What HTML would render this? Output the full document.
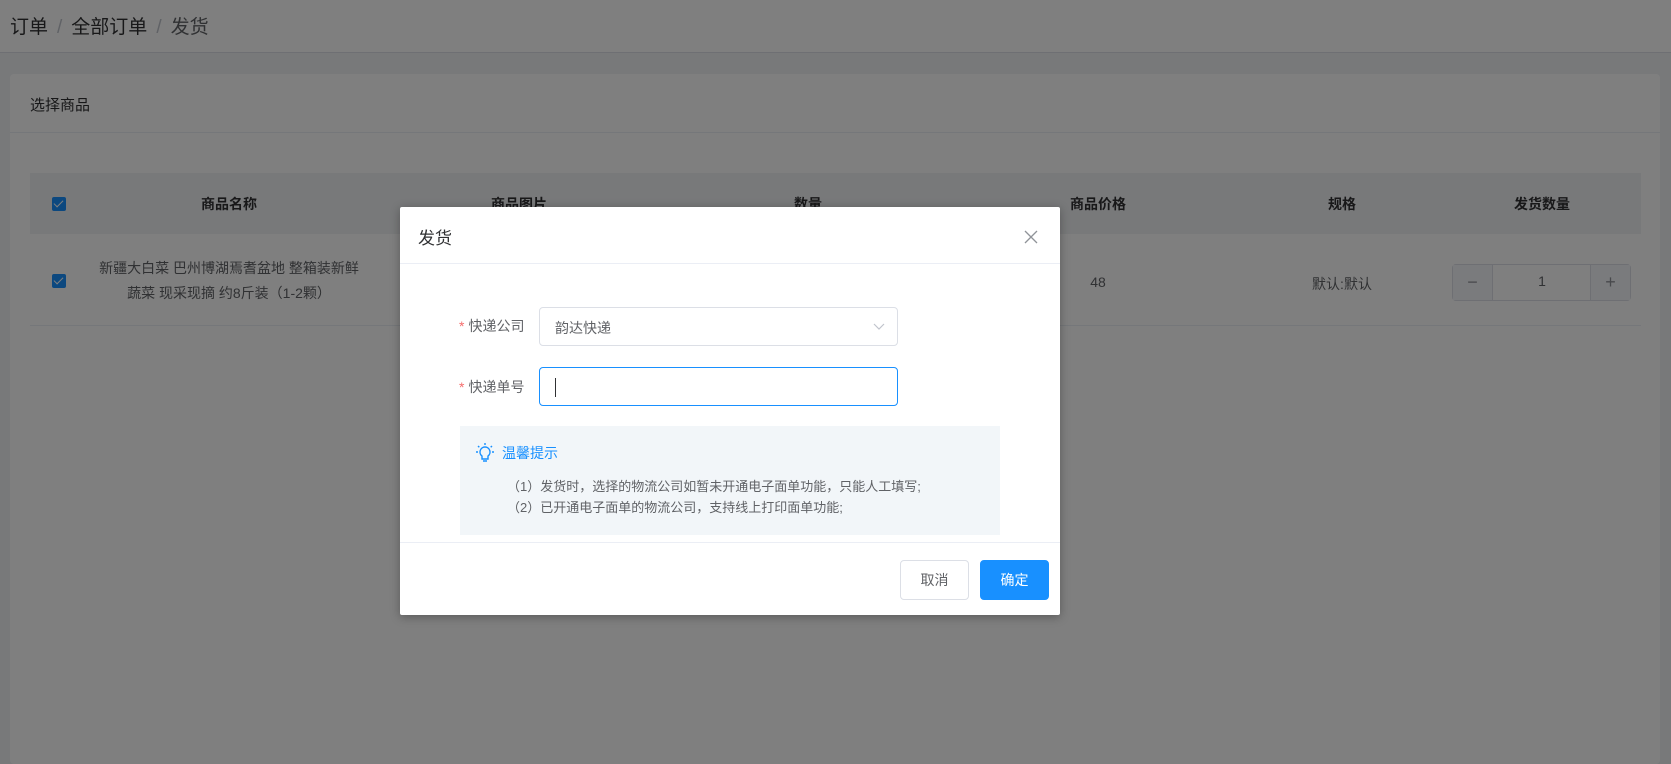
<!DOCTYPE html>
<html style="overflow:hidden"><head><meta charset="utf-8"><style>
*{box-sizing:border-box;margin:0;padding:0}
html,body{width:1671px;height:764px;overflow:hidden}
body{background:#f0f2f5;font-family:"Liberation Sans","Noto Sans CJK SC",sans-serif;color:#303133;position:relative}
.bc{position:absolute;left:0;top:0;width:1671px;height:53px;background:#fff;border-bottom:1px solid #dcdfe6;font-size:19px;padding:12px 0 0 10px;color:#303133}
.bc span.s{color:#c0c4cc;margin:0 9px}
.bc .l{color:#606266}
.card{position:absolute;left:10px;top:74px;width:1650px;height:690px;background:#fff;border-radius:4px}
.card .hd{height:59px;border-bottom:1px solid #ebeef5;padding:20px 0 0 20px;font-size:15px}
.th{position:absolute;left:20px;top:99px;width:1611px;height:61px;background:#f0f2f5;font-weight:bold;font-size:14px;color:#303133}
.cell{position:absolute;transform:translateX(-50%);white-space:nowrap}
.cb{position:absolute;width:14px;height:14px;background:#1890ff;border-radius:2px}
.cb:after{content:"";position:absolute;left:4px;top:1px;width:4px;height:8px;border:solid #fff;border-width:0 1.5px 1.5px 0;transform:rotate(45deg)}
.row{position:absolute;left:20px;top:160px;width:1611px;height:92px;border-bottom:1px solid #ebeef5;font-size:14px;color:#606266}
.step{position:absolute;left:1422px;top:30px;width:179px;height:37px;border:1px solid #dcdfe6;border-radius:4px;background:#fff}
.step .b{position:absolute;top:0;width:40px;height:35px;background:#f5f7fa;color:#909399;text-align:center;line-height:35px;font-size:18px}
.mask{position:absolute;left:0;top:0;width:1671px;height:764px;background:rgba(0,0,0,.5)}
.modal{position:absolute;left:400px;top:207px;width:660px;height:408px;background:#fff;border-radius:2px;box-shadow:0 2px 10px rgba(0,0,0,.3)}
.mh{height:57px;border-bottom:1px solid #ebeef5;padding:17px 0 0 18px;font-size:17px;color:#303133;position:relative}
.x{position:absolute;right:22px;top:23px;width:14px;height:14px}
.lab{position:absolute;left:59px;font-size:14px;color:#606266}
.lab i{color:#f56c6c;font-style:normal;margin-right:4px}
.inp{position:absolute;left:139px;width:359px;height:39px;border:1px solid #dcdfe6;border-radius:4px;font-size:14px;color:#606266;padding:10px 15px}
.tip{position:absolute;left:60px;top:219px;width:540px;height:109px;background:#f2f6f9}
.ft{position:absolute;left:0;top:335px;width:660px;border-top:1px solid #ebeef5}
.btn{position:absolute;top:353px;height:40px;width:69px;border-radius:4px;font-size:14px;text-align:center;line-height:38px}
</style></head><body>
<div class="bc">订单<span class="s">/</span>全部订单<span class="s">/</span><span class="l">发货</span></div>
<div class="card">
 <div class="hd">选择商品</div>
 <div class="th">
  <div class="cb" style="left:22px;top:24px"></div>
  <div class="cell" style="left:199px;top:21px">商品名称</div>
  <div class="cell" style="left:489px;top:21px">商品图片</div>
  <div class="cell" style="left:778px;top:21px">数量</div>
  <div class="cell" style="left:1068px;top:21px">商品价格</div>
  <div class="cell" style="left:1312px;top:21px">规格</div>
  <div class="cell" style="left:1512px;top:21px">发货数量</div>
 </div>
 <div class="row">
  <div class="cb" style="left:22px;top:40px"></div>
  <div class="cell" style="left:199px;top:22px;text-align:center;line-height:25px">新疆大白菜 巴州博湖焉耆盆地 整箱装新鲜<br>蔬菜 现采现摘 约8斤装（1-2颗）</div>
  <div class="cell" style="left:1068px;top:40px">48</div>
  <div class="cell" style="left:1312px;top:40px">默认:默认</div>
  <div class="step"><div class="b" style="left:0;border-right:1px solid #dcdfe6">−</div><div class="cell" style="left:89px;top:8px;color:#606266">1</div><div class="b" style="right:0;border-left:1px solid #dcdfe6">+</div></div>
 </div>
</div>
<div class="mask"></div>
<div class="modal">
 <div class="mh">发货<svg class="x" viewBox="0 0 14 14"><path d="M1 1L13 13M13 1L1 13" stroke="#909399" stroke-width="1.3"/></svg></div>
 <div class="lab" style="top:109px"><i>*</i>快递公司</div>
 <div class="inp" style="top:100px">韵达快递<svg style="position:absolute;right:12px;top:15px" width="12" height="8" viewBox="0 0 12 8"><path d="M1 1L6 6L11 1" fill="none" stroke="#c0c4cc" stroke-width="1.2"/></svg></div>
 <div class="lab" style="top:170px"><i>*</i>快递单号</div>
 <div class="inp" style="top:160px;border-color:#1890ff"><div style="width:1px;height:19px;background:#303133"></div></div>
 <div class="tip">
  <svg style="position:absolute;left:15px;top:16px" width="20" height="22" viewBox="0 0 20 22"><g fill="none" stroke="#1890ff" stroke-width="1.4"><path d="M10 5a5 5 0 0 0-3 9v3h6v-3a5 5 0 0 0-3-9z"/><path d="M8 19h4M10 1v2M3 4l1.3 1.3M17 4l-1.3 1.3M1 10h2M17 10h2"/></g></svg>
  <div style="position:absolute;left:42px;top:17px;color:#1890ff;font-size:14px">温馨提示</div>
  <div style="position:absolute;left:47px;top:50px;color:#606266;font-size:13px;line-height:21px">（1）发货时，选择的物流公司如暂未开通电子面单功能，只能人工填写;<br>（2）已开通电子面单的物流公司，支持线上打印面单功能;</div>
 </div>
 <div class="ft"></div>
 <div class="btn" style="left:500px;border:1px solid #dcdfe6;color:#606266">取消</div>
 <div class="btn" style="left:580px;background:#1890ff;color:#fff;border:1px solid #1890ff">确定</div>
</div>
</body></html>
